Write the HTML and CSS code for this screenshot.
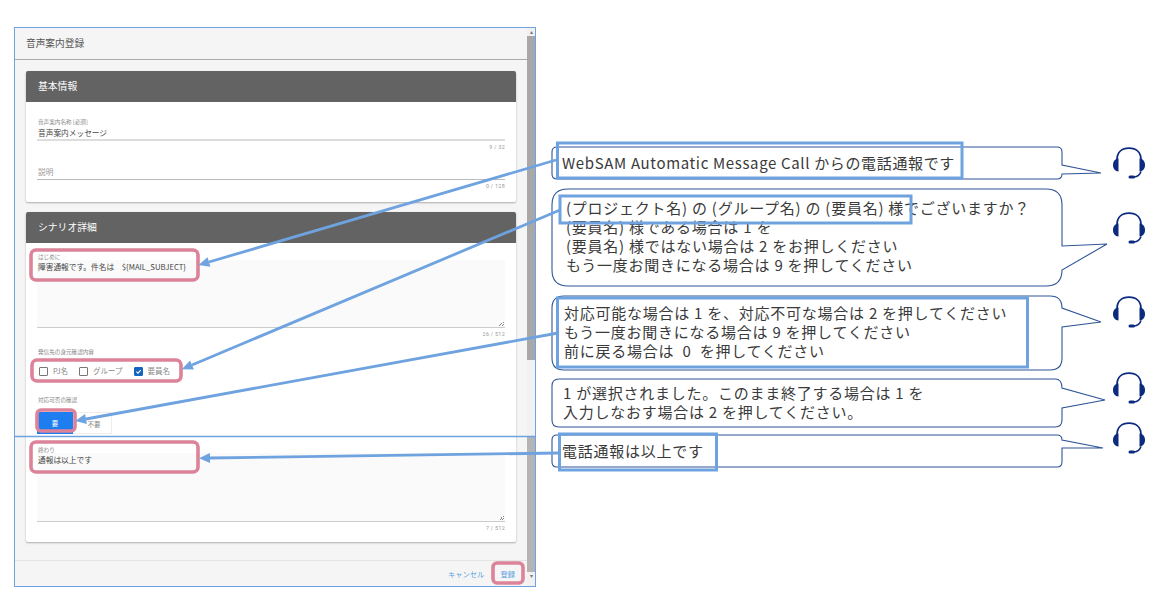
FILE: index.html
```html
<!DOCTYPE html>
<html lang="ja">
<head>
  <meta charset="UTF-8" />
  <title>音声案内登録</title>
  <link rel="stylesheet" href="styles.css">
</head>
<body>
  <div class="sheet">
    <div class="window">
      <div class="main">
        <div class="title-bar">音声案内登録</div>

        <div class="content">
          <section class="card">
            <h2 class="card-head">基本情報</h2>
            <div class="card-body basic">
              <div class="label">音声案内名称 [必須]</div>
              <div class="input filled">音声案内メッセージ</div>
              <div class="count">9 / 32</div>
              <div class="input empty">説明</div>
              <div class="count">0 / 128</div>
            </div>
          </section>

          <section class="card">
            <h2 class="card-head">シナリオ詳細</h2>
            <div class="card-body scenario">
              <div class="label">はじめに</div>
              <div class="memo">障害通報です。件名は　${MAIL_SUBJECT}<span class="grip"></span></div>
              <div class="count">26 / 512</div>

              <div class="label group-label">発信先の身元確認内容</div>
              <div class="checks">
                <span class="check"><i class="box"></i>PJ名</span>
                <span class="check"><i class="box"></i>グループ</span>
                <span class="check"><i class="box on"><svg viewBox="0 0 10 10"><path d="M2 5.2l2.2 2.2L8.2 3" /></svg></i>要員名</span>
              </div>

              <div class="label confirm-label">対応可否の確認</div>
              <div class="toggle">
                <span class="toggle-on">要</span>
                <span class="toggle-off">不要</span>
              </div>

              <div class="label end-label">終わり</div>
              <div class="memo short">通報は以上です<span class="grip"></span></div>
              <div class="count">7 / 512</div>
            </div>
          </section>
        </div>

        <div class="footer">
          <a class="btn">キャンセル</a>
          <a class="btn">登録</a>
        </div>
      </div>

      <div class="scrollbar">
        <span class="sb-arrow">▴</span>
        <span class="sb-thumb"></span>
        <span class="sb-gap"></span>
        <span class="sb-thumb second"></span>
        <span class="sb-arrow">▾</span>
      </div>
    </div>

    <!-- speech bubbles -->
    <svg class="layer bubbles" viewBox="0 0 1175 607">
      <path d="M557 147H1057Q1062 147 1062 152V165L1101 173L1062 174V174Q1062 179 1057 179H557Q552 179 552 174V152Q552 147 557 147Z" />
      <path d="M568 189H1046Q1062 189 1062 205V246L1107 244L1062 270Q1062 286 1046 286H568Q552 286 552 270V205Q552 189 568 189Z" />
      <path d="M564 296H1050Q1062 296 1062 308L1101 322L1062 327V358Q1062 370 1050 370H564Q552 370 552 358V308Q552 296 564 296Z" />
      <path d="M559 379H1055Q1062 379 1062 388L1105 400L1062 408V420Q1062 427 1055 427H559Q552 427 552 420V386Q552 379 559 379Z" />
      <path d="M557 435H1057Q1062 435 1062 440L1103 448H1062V462Q1062 467 1057 467H557Q552 467 552 462V440Q552 435 557 435Z" />
    </svg>

    <div class="say say-1">WebSAM Automatic Message Call からの電話通報です</div>
    <div class="say say-2">(プロジェクト名) の (グループ名) の (要員名) 様でございますか？
(要員名) 様である場合は 1 を
(要員名) 様ではない場合は 2 をお押しください
もう一度お聞きになる場合は 9 を押してください</div>
    <div class="say say-3">対応可能な場合は 1 を、対応不可な場合は 2 を押してください
もう一度お聞きになる場合は 9 を押してください
前に戻る場合は  0  を押してください</div>
    <div class="say say-4">1 が選択されました。このまま終了する場合は 1 を
入力しなおす場合は 2 を押してください。</div>
    <div class="say say-5">電話通報は以上です</div>

    <!-- headsets -->
    <svg class="head head-1" viewBox="0 0 34 32"><use href="#headset" /></svg>
    <svg class="head head-2" viewBox="0 0 34 32"><use href="#headset" /></svg>
    <svg class="head head-3" viewBox="0 0 34 32"><use href="#headset" /></svg>
    <svg class="head head-4" viewBox="0 0 34 32"><use href="#headset" /></svg>
    <svg class="head head-5" viewBox="0 0 34 32"><use href="#headset" /></svg>

    <!-- annotations drawn over the screenshot -->
    <svg class="layer notes" viewBox="0 0 1175 607">
      <defs>
        <marker id="tip" markerUnits="userSpaceOnUse" markerWidth="12" markerHeight="10" refX="1" refY="5" orient="auto">
          <path d="M11 0L0 5L11 10Z" transform="rotate(180 6 5)" fill="#6fa3e0" />
        </marker>
        <g id="headset">
          <path d="M5 13C5 5 10 1.2 17 1.2S29 5 29 13" fill="none" stroke="#0b2a80" stroke-width="1.8" />
          <path d="M6.5 11.5V24.5C3 24.5 1 21.5 1 18S3 11.5 6.5 11.5Z" fill="#0b2a80" />
          <path d="M27.5 11.5V24.5C31 24.5 33 21.5 33 18S31 11.5 27.5 11.5Z" fill="#0b2a80" />
          <path d="M29 24.5C28 27.5 26 29.5 22 30" fill="none" stroke="#0b2a80" stroke-width="1.6" />
          <rect x="16.5" y="28.5" width="6.5" height="3" rx="1.5" fill="#0b2a80" />
        </g>
      </defs>
      <rect class="pink" x="31" y="250" width="167" height="30" rx="5" />
      <rect class="pink" x="32" y="360" width="149" height="21" rx="5" />
      <rect class="pink" x="37" y="410" width="38" height="21" rx="4" />
      <rect class="pink" x="31" y="442" width="167" height="30" rx="5" />
      <rect class="pink" x="493" y="563" width="30" height="20" rx="4" />

      <path class="rule" d="M14 436.5H536" />
      <rect class="mark" x="557.5" y="143" width="404.5" height="35" />
      <rect class="mark" x="560" y="196" width="351" height="27" />
      <rect class="mark" x="557.5" y="298" width="470" height="69" />
      <rect class="mark" x="559.5" y="434" width="157" height="36" />

      <path class="arrow" d="M556 160L209 262" marker-end="url(#tip)" />
      <path class="arrow" d="M560 210L192 365" marker-end="url(#tip)" />
      <path class="arrow" d="M558 333L86 419" marker-end="url(#tip)" />
      <path class="arrow" d="M559 453L210 458" marker-end="url(#tip)" />
    </svg>
  </div>
</body>
</html>
```

FILE: styles.css
```css
* {
  box-sizing: border-box;
}

body {
  margin: 0;
  background-color: #fff;
  font-family: 'Noto Sans CJK JP', 'Roboto', sans-serif;
  overflow: hidden;
}

.sheet {
  position: relative;
  width: 1175px;
  height: 607px;
  padding: 27px 0 0 14px;
  overflow: hidden;
}

.window {
  display: flex;
  width: 522px;
  height: 560px;
  border: 1px solid #6fa3e0;
  background-color: #f5f5f5;
}

.main {
  display: flex;
  flex-direction: column;
  flex: 1;
  min-width: 0;
}

.title-bar {
  height: 32px;
  padding-left: 11px;
  font-size: 9.7px;
  line-height: 30px;
  color: #555;
  border-bottom: 1px solid #aaa;
}

.content {
  flex: 1;
  padding: 11px 11px 0 11px;
  display: flex;
  flex-direction: column;
  gap: 10px;
}

.card {
  background-color: #fff;
  border-radius: 2px;
  box-shadow: 0 1px 2px rgba(0,0,0,0.3);
}

.card-head {
  margin: 0;
  height: 31px;
  padding-left: 12px;
  background-color: #636363;
  border-radius: 2px 2px 0 0;
  color: #fff;
  font-size: 9.8px;
  font-weight: 400;
  line-height: 31px;
}

.card-body {
  padding: 0 11px 0 11px;
}

.basic {
  height: 100px;
  padding-top: 17px;
}

.scenario {
  height: 299px;
  padding-top: 11px;
}

.label {
  height: 6px;
  margin-left: 1px;
  font-size: 5.6px;
  line-height: 6px;
  color: #888;
  white-space: nowrap;
}

.group-label {
  margin-top: 10px;
}

.confirm-label {
  margin-top: 20px;
}

.end-label {
  margin-top: 13px;
}

.input {
  height: 15px;
  padding-left: 1px;
  font-size: 7.7px;
  line-height: 14px;
}

.input.filled {
  margin-top: 1px;
  color: #444;
  border-bottom: 2px solid #ddd;
}

.input.empty {
  margin-top: 13px;
  color: #999;
  border-bottom: 1px solid #bbb;
}

.count {
  height: 9px;
  margin-top: 2px;
  font-family: 'Roboto', sans-serif;
  font-size: 5.4px;
  line-height: 9px;
  letter-spacing: 0.3px;
  color: #999;
  text-align: right;
}

.memo {
  position: relative;
  height: 68px;
  padding-left: 1px;
  background-color: #fafafa;
  border-bottom: 1px solid #ccc;
  font-size: 7.7px;
  line-height: 13px;
  color: #444;
}

.memo.short {
  height: 69px;
}

.grip {
  position: absolute;
  right: 1px;
  bottom: 1px;
  width: 5px;
  height: 5px;
  background: linear-gradient(135deg, transparent 50%, #888 50%, #888 60%, transparent 60%, transparent 75%, #888 75%, #888 85%, transparent 85%);
}

.checks {
  display: flex;
  gap: 11px;
  height: 12px;
  margin: 10px 0 0 2px;
  font-size: 7.5px;
  line-height: 12px;
  color: #888;
}

.check {
  display: flex;
  align-items: center;
  gap: 5px;
}

.box {
  width: 9px;
  height: 9px;
  border: 1px solid #777;
  border-radius: 1px;
}

.box.on {
  background-color: #1565c0;
  border-color: #1565c0;
}

.box svg {
  display: block;
  width: 100%;
  height: 100%;
  fill: none;
  stroke: #fff;
  stroke-width: 1.5;
}

.toggle {
  display: flex;
  width: 75px;
  height: 22px;
  margin-top: 9px;
  font-size: 6.5px;
  line-height: 22px;
  text-align: center;
  border: 1px solid #eee;
}

.toggle-on {
  width: 36px;
  margin: -1px 0 -1px -1px;
  background-color: #1e7ef0;
  color: #fff;
}

.toggle-off {
  flex: 1;
  color: #888;
  padding-left: 4px;
}

.footer {
  display: flex;
  justify-content: flex-end;
  align-items: center;
  gap: 16px;
  height: 26px;
  padding-right: 12px;
  border-top: 1px solid #e4e4e4;
  font-size: 7.3px;
  color: #5c9fe0;
}

.scrollbar {
  display: flex;
  flex-direction: column;
  width: 8px;
  background-color: #f1f1f1;
}

.sb-arrow {
  height: 8px;
  font-size: 6px;
  line-height: 8px;
  text-align: center;
  color: #777;
}

.sb-thumb {
  height: 324px;
  background-color: #a8a8a8;
}

.sb-gap {
  height: 77px;
}

.sb-thumb.second {
  height: 135px;
  background-color: #b4b4b4;
}

.layer {
  position: absolute;
  top: 0;
  left: 0;
  width: 1175px;
  height: 607px;
}

.bubbles path {
  fill: #fff;
  stroke: #2f5597;
  stroke-width: 1.1;
}

.say {
  position: absolute;
  font-size: 15px;
  line-height: 19px;
  letter-spacing: 0.75px;
  color: #3a3a3a;
  white-space: pre;
}

.say-1 { left: 562px; top: 153px; letter-spacing: 0.65px; }
.say-2 { left: 566px; top: 198px; }
.say-3 { left: 564px; top: 303px; }
.say-4 { left: 563px; top: 383px; }
.say-5 { left: 562px; top: 441px; }

.head {
  position: absolute;
  left: 1112px;
  width: 34px;
  height: 32px;
}

.head-1 { top: 147px; }
.head-2 { top: 212px; }
.head-3 { top: 296px; }
.head-4 { top: 372px; }
.head-5 { top: 422px; }

.notes {
  fill: none;
}

.pink {
  stroke: #dc8299;
  stroke-width: 3.6;
}

.mark {
  stroke: #6fa3e0;
  stroke-width: 3;
}

.rule {
  stroke: #6fa3e0;
  stroke-width: 1.5;
}

.arrow {
  stroke: #6fa3e0;
  stroke-width: 2.8;
}
```
